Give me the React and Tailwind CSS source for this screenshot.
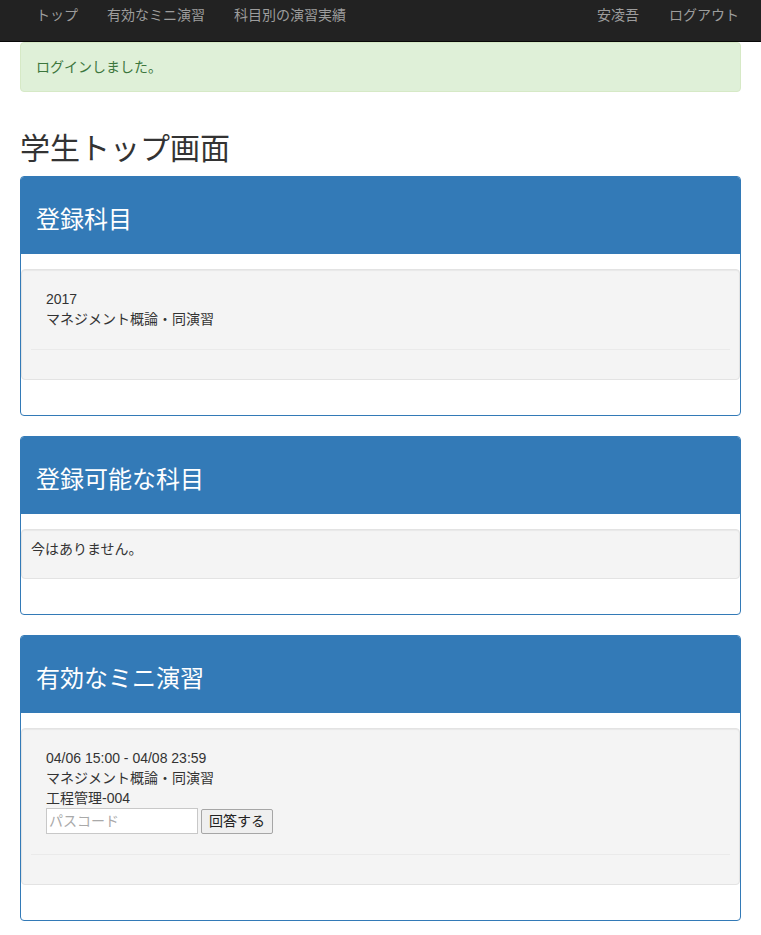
import React from "react";

const font = { fontFamily: '"Liberation Sans", "Noto Sans CJK JP", sans-serif' };

function Panel({ title, children }) {
  return (
    <div className="mb-5 rounded border border-[#337ab7] bg-white">
      <div className="rounded-t-[3px] bg-[#337ab7] px-[15px] pt-[30px] pb-[21px] text-[24px] leading-[26px] text-white">
        {title}
      </div>
      <div className="pt-[15px] pb-[15px]">{children}</div>
    </div>
  );
}

function Well({ children }) {
  return (
    <div className="mb-5 rounded border border-[#e3e3e3] bg-[#f4f4f4] p-[9px] shadow-[inset_0_1px_1px_rgba(0,0,0,0.05)]">
      {children}
    </div>
  );
}

export default function App() {
  return (
    <div className="min-h-[935px] bg-white text-[14px] leading-5 text-[#333]" style={font}>
      <nav className="flex h-[42px] items-start justify-between border-b border-[#080808] bg-[#222] text-[#9d9d9d]">
        <div className="flex pl-[21px] pt-[5px]">
          <span className="px-[15px]">トップ</span>
          <span className="px-[14px]">有効なミニ演習</span>
          <span className="px-[15px]">科目別の演習実績</span>
        </div>
        <div className="flex pr-[7px] pt-[5px]">
          <span className="px-[15px]">安凌吾</span>
          <span className="px-[15px]">ログアウト</span>
        </div>
      </nav>
      <div className="px-5">
        <div className="rounded border border-[#d6e9c6] bg-[#dff0d8] px-[15px] py-[14px] text-[#3c763d]">
          ログインしました。
        </div>
        <h2 className="mt-10 mb-[11px] text-[30px] leading-[33px] font-normal">学生トップ画面</h2>
        <Panel title="登録科目">
          <Well>
            <div className="px-[15px] pt-[10px]">
              <div>2017</div>
              <div>マネジメント概論・同演習</div>
            </div>
            <hr className="my-5 border-t border-[#eaeaea]" />
          </Well>
        </Panel>
        <Panel title="登録可能な科目">
          <Well>
            <p className="mb-[10px]">今はありません。</p>
          </Well>
        </Panel>
        <Panel title="有効なミニ演習">
          <Well>
            <div className="px-[15px] pt-[10px]">
              <div>04/06 15:00 - 04/08 23:59</div>
              <div>マネジメント概論・同演習</div>
              <div>工程管理-004</div>
              <div className="flex items-center gap-[3px]">
                <input
                  placeholder="パスコード"
                  className="h-[26px] w-[152px] border border-[#c8c8c8] bg-white px-[2px] text-[14px] placeholder-[#a9a9a9] outline-none"
                  style={font}
                />
                <button
                  className="h-[25px] rounded-[2px] border border-[#a6a6a6] bg-[#efefef] px-[7px] text-[14px] text-[#222]"
                  style={font}
                >
                  回答する
                </button>
              </div>
            </div>
            <hr className="my-5 border-t border-[#eaeaea]" />
          </Well>
        </Panel>
      </div>
    </div>
  );
}
